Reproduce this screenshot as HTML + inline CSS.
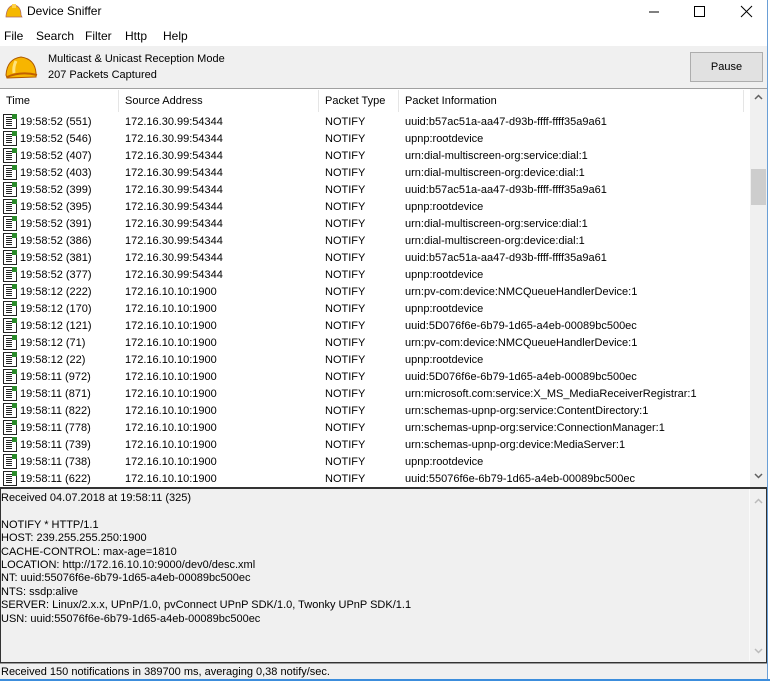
<!DOCTYPE html>
<html><head><meta charset="utf-8"><style>
*{margin:0;padding:0;box-sizing:border-box}
body{width:770px;height:681px;background:#fff;font-family:"Liberation Sans",Arial,sans-serif;font-size:11px;color:#000;position:relative;overflow:hidden}
.abs{position:absolute}
.title{top:0;left:0;width:767px;height:24px;background:#fff}
.menu{top:26px;left:0;height:20px}
.menu span{position:absolute;top:3px;font-size:12px}
.tool{top:46px;left:0;width:767px;height:43px;background:#f0f0f0;border-bottom:1px solid #a0a0a0}
.hdr{top:90px;left:0;width:750px;height:22px;background:#fff}
.hdr span{position:absolute;top:5px}
.sep{position:absolute;top:0;width:1px;height:22px;background:#e5e5e5}
.row{position:absolute;left:0;height:17px;width:745px;white-space:nowrap}
.row span{position:absolute;top:3px}
.ic{position:absolute;left:3px;top:1px;width:14px;height:15px;border:1px solid #222;background:#fff}
.ic:before{content:"";position:absolute;left:2px;top:2px;width:6px;height:9px;background:repeating-linear-gradient(#222 0 1px,transparent 1px 2px)}
.ic:after{content:"";position:absolute;right:-1px;top:-1px;width:5px;height:5px;background:#2a8a2a}
.vsb{position:absolute;width:17px;background:#f0f0f0}
.det{top:487px;left:0;width:767px;height:176px;background:#f0f0f0;border:1px solid #333;border-top:2px solid #333}
.det pre{font-family:"Liberation Sans",Arial,sans-serif;font-size:11px;line-height:13.4px;position:absolute;left:0;top:3px}
.status{top:663px;left:0;width:767px;height:16px;background:#f0f0f0;border-top:1px solid #999}
</style></head><body>
<div class="abs title">
<svg class="abs" style="left:5px;top:3px" width="18" height="16"><path d="M1 13 Q2 3 9 2 Q16 3 16 12 L17 14 L1 14Z" fill="#f5b800" stroke="#a66" stroke-width="0.7"/><rect x="7" y="1" width="4" height="4" fill="#ffd24a"/></svg>
<span class="abs" style="left:27px;top:4px;font-size:12px">Device Sniffer</span>
<svg class="abs" style="left:645px;top:5px" width="110" height="14"><path d="M4 7H14" stroke="#000"/><rect x="49.5" y="1.5" width="10" height="10" fill="none" stroke="#000"/><path d="M96 1L107 12M107 1L96 12" stroke="#000"/></svg>
</div>
<div class="abs" style="left:767px;top:0;width:3px;height:681px;background:#fff;border-left:1px solid #6a9fd6"></div>
<div class="abs menu"><span style="left:4px">File</span><span style="left:36px">Search</span><span style="left:85px">Filter</span><span style="left:125px">Http</span><span style="left:163px">Help</span></div>
<div class="abs tool">
<svg class="abs" style="left:4px;top:7px" width="34" height="28"><path d="M2 22 Q3 6 17 4 Q31 6 32 20 L32 24 L3 25Z" fill="#f7b500" stroke="#b05a00"/><path d="M3 24 Q17 18 33 22" stroke="#c06000" fill="none" stroke-width="2"/><path d="M12 8 Q9 14 10 20" stroke="#ffe27a" stroke-width="3" fill="none"/></svg>
<span class="abs" style="left:48px;top:7px">Multicast &amp; Unicast Reception Mode</span>
<span class="abs" style="left:48px;top:23px">207 Packets Captured</span>
<div class="abs" style="left:690px;top:6px;width:73px;height:30px;background:#e1e1e1;border:1px solid #adadad;text-align:center;line-height:29px">Pause</div>
</div>
<div class="abs hdr"><span style="left:6px">Time</span><span style="left:125px">Source Address</span><span style="left:325px">Packet Type</span><span style="left:405px">Packet Information</span>
<div class="sep" style="left:118px"></div><div class="sep" style="left:318px"></div><div class="sep" style="left:398px"></div><div class="sep" style="left:743px"></div></div>
<div class="vsb" style="left:750px;top:89px;height:398px">
<svg class="abs" style="left:4px;top:5px" width="9" height="6"><path d="M1 5L4.5 1.5L8 5" stroke="#606060" stroke-width="1.5" fill="none"/></svg>
<div class="abs" style="left:1px;top:80px;width:15px;height:36px;background:#cdcdcd"></div>
<svg class="abs" style="left:4px;top:384px" width="9" height="6"><path d="M1 1L4.5 4.5L8 1" stroke="#606060" stroke-width="1.5" fill="none"/></svg>
</div>
<div id="rows">
<div class="row" style="top:113px"><i class="ic"></i><span style="left:20px">19:58:52 (551)</span><span style="left:125px">172.16.30.99:54344</span><span style="left:325px">NOTIFY</span><span style="left:405px">uuid:b57ac51a-aa47-d93b-ffff-ffff35a9a61</span></div>
<div class="row" style="top:130px"><i class="ic"></i><span style="left:20px">19:58:52 (546)</span><span style="left:125px">172.16.30.99:54344</span><span style="left:325px">NOTIFY</span><span style="left:405px">upnp:rootdevice</span></div>
<div class="row" style="top:147px"><i class="ic"></i><span style="left:20px">19:58:52 (407)</span><span style="left:125px">172.16.30.99:54344</span><span style="left:325px">NOTIFY</span><span style="left:405px">urn:dial-multiscreen-org:service:dial:1</span></div>
<div class="row" style="top:164px"><i class="ic"></i><span style="left:20px">19:58:52 (403)</span><span style="left:125px">172.16.30.99:54344</span><span style="left:325px">NOTIFY</span><span style="left:405px">urn:dial-multiscreen-org:device:dial:1</span></div>
<div class="row" style="top:181px"><i class="ic"></i><span style="left:20px">19:58:52 (399)</span><span style="left:125px">172.16.30.99:54344</span><span style="left:325px">NOTIFY</span><span style="left:405px">uuid:b57ac51a-aa47-d93b-ffff-ffff35a9a61</span></div>
<div class="row" style="top:198px"><i class="ic"></i><span style="left:20px">19:58:52 (395)</span><span style="left:125px">172.16.30.99:54344</span><span style="left:325px">NOTIFY</span><span style="left:405px">upnp:rootdevice</span></div>
<div class="row" style="top:215px"><i class="ic"></i><span style="left:20px">19:58:52 (391)</span><span style="left:125px">172.16.30.99:54344</span><span style="left:325px">NOTIFY</span><span style="left:405px">urn:dial-multiscreen-org:service:dial:1</span></div>
<div class="row" style="top:232px"><i class="ic"></i><span style="left:20px">19:58:52 (386)</span><span style="left:125px">172.16.30.99:54344</span><span style="left:325px">NOTIFY</span><span style="left:405px">urn:dial-multiscreen-org:device:dial:1</span></div>
<div class="row" style="top:249px"><i class="ic"></i><span style="left:20px">19:58:52 (381)</span><span style="left:125px">172.16.30.99:54344</span><span style="left:325px">NOTIFY</span><span style="left:405px">uuid:b57ac51a-aa47-d93b-ffff-ffff35a9a61</span></div>
<div class="row" style="top:266px"><i class="ic"></i><span style="left:20px">19:58:52 (377)</span><span style="left:125px">172.16.30.99:54344</span><span style="left:325px">NOTIFY</span><span style="left:405px">upnp:rootdevice</span></div>
<div class="row" style="top:283px"><i class="ic"></i><span style="left:20px">19:58:12 (222)</span><span style="left:125px">172.16.10.10:1900</span><span style="left:325px">NOTIFY</span><span style="left:405px">urn:pv-com:device:NMCQueueHandlerDevice:1</span></div>
<div class="row" style="top:300px"><i class="ic"></i><span style="left:20px">19:58:12 (170)</span><span style="left:125px">172.16.10.10:1900</span><span style="left:325px">NOTIFY</span><span style="left:405px">upnp:rootdevice</span></div>
<div class="row" style="top:317px"><i class="ic"></i><span style="left:20px">19:58:12 (121)</span><span style="left:125px">172.16.10.10:1900</span><span style="left:325px">NOTIFY</span><span style="left:405px">uuid:5D076f6e-6b79-1d65-a4eb-00089bc500ec</span></div>
<div class="row" style="top:334px"><i class="ic"></i><span style="left:20px">19:58:12 (71)</span><span style="left:125px">172.16.10.10:1900</span><span style="left:325px">NOTIFY</span><span style="left:405px">urn:pv-com:device:NMCQueueHandlerDevice:1</span></div>
<div class="row" style="top:351px"><i class="ic"></i><span style="left:20px">19:58:12 (22)</span><span style="left:125px">172.16.10.10:1900</span><span style="left:325px">NOTIFY</span><span style="left:405px">upnp:rootdevice</span></div>
<div class="row" style="top:368px"><i class="ic"></i><span style="left:20px">19:58:11 (972)</span><span style="left:125px">172.16.10.10:1900</span><span style="left:325px">NOTIFY</span><span style="left:405px">uuid:5D076f6e-6b79-1d65-a4eb-00089bc500ec</span></div>
<div class="row" style="top:385px"><i class="ic"></i><span style="left:20px">19:58:11 (871)</span><span style="left:125px">172.16.10.10:1900</span><span style="left:325px">NOTIFY</span><span style="left:405px">urn:microsoft.com:service:X_MS_MediaReceiverRegistrar:1</span></div>
<div class="row" style="top:402px"><i class="ic"></i><span style="left:20px">19:58:11 (822)</span><span style="left:125px">172.16.10.10:1900</span><span style="left:325px">NOTIFY</span><span style="left:405px">urn:schemas-upnp-org:service:ContentDirectory:1</span></div>
<div class="row" style="top:419px"><i class="ic"></i><span style="left:20px">19:58:11 (778)</span><span style="left:125px">172.16.10.10:1900</span><span style="left:325px">NOTIFY</span><span style="left:405px">urn:schemas-upnp-org:service:ConnectionManager:1</span></div>
<div class="row" style="top:436px"><i class="ic"></i><span style="left:20px">19:58:11 (739)</span><span style="left:125px">172.16.10.10:1900</span><span style="left:325px">NOTIFY</span><span style="left:405px">urn:schemas-upnp-org:device:MediaServer:1</span></div>
<div class="row" style="top:453px"><i class="ic"></i><span style="left:20px">19:58:11 (738)</span><span style="left:125px">172.16.10.10:1900</span><span style="left:325px">NOTIFY</span><span style="left:405px">upnp:rootdevice</span></div>
<div class="row" style="top:470px;height:16px;overflow:hidden"><i class="ic"></i><span style="left:20px">19:58:11 (622)</span><span style="left:125px">172.16.10.10:1900</span><span style="left:325px">NOTIFY</span><span style="left:405px">uuid:55076f6e-6b79-1d65-a4eb-00089bc500ec</span></div>
</div>
<div class="abs det">
<pre>Received 04.07.2018 at 19:58:11 (325)

NOTIFY * HTTP/1.1
HOST: 239.255.255.250:1900
CACHE-CONTROL: max-age=1810
LOCATION: http://172.16.10.10:9000/dev0/desc.xml
NT: uuid:55076f6e-6b79-1d65-a4eb-00089bc500ec
NTS: ssdp:alive
SERVER: Linux/2.x.x, UPnP/1.0, pvConnect UPnP SDK/1.0, Twonky UPnP SDK/1.1
USN: uuid:55076f6e-6b79-1d65-a4eb-00089bc500ec</pre>
<div class="vsb" style="left:748px;top:0;height:172px;border-left:1px solid #fafafa">
<svg class="abs" style="left:4px;top:9px" width="9" height="6"><path d="M1 5L4.5 1.5L8 5" stroke="#bbb" stroke-width="1.5" fill="none"/></svg>
<svg class="abs" style="left:4px;top:159px" width="9" height="6"><path d="M1 1L4.5 4.5L8 1" stroke="#bbb" stroke-width="1.5" fill="none"/></svg>
</div>
</div>
<div class="abs status"><span class="abs" style="left:1px;top:2px">Received 150 notifications in 389700 ms, averaging 0,38 notify/sec.</span></div>
<div class="abs" style="left:0;top:679px;width:770px;height:2px;background:#3c8ddc"></div>
</body></html>
